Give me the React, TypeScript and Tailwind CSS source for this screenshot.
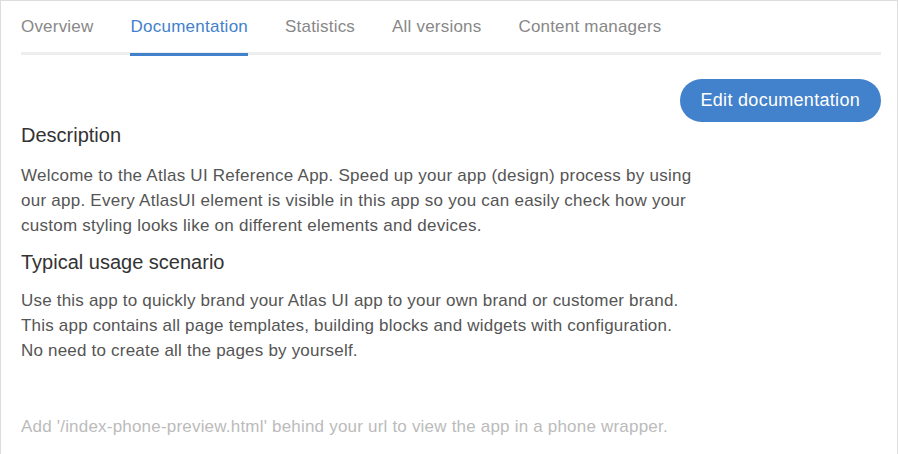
const tabs = ["Overview", "Documentation", "Statistics", "All versions", "Content managers"];

export default function App() {
    const active = "Documentation";

    return (
        <div
            className="w-[898px] h-[454px] overflow-hidden bg-white border-l border-t border-r border-[#dddddd] pl-5 pr-4"
            style={{ fontFamily: '"Liberation Sans", Arial, sans-serif' }}
        >
            {/* Tabs */}
            <div className="flex gap-[37px] border-b-[3px] border-[#eeeeee]">
                {tabs.map((tab) =>
                    tab === active ? (
                        <div
                            key={tab}
                            className="pt-[14px] pb-[14px] -mb-[4px] border-b-[3px] border-[#4281cb] text-[17px] tracking-[0.25px] leading-[24px] text-[#4281cb]"
                        >
                            {tab}
                        </div>
                    ) : (
                        <div
                            key={tab}
                            className="pt-[14px] pb-[13px] text-[17px] tracking-[0.2px] leading-[24px] text-[#888888]"
                        >
                            {tab}
                        </div>
                    )
                )}
            </div>

            {/* Toolbar */}
            <div className="flex justify-end mt-[24px]">
                <button className="h-[43px] px-[21px] rounded-full bg-[#4281cb] text-white text-[18px] tracking-[0.3px]">
                    Edit documentation
                </button>
            </div>

            {/* Content */}
            <h2 className="text-[20px] leading-[26px] text-[#333333]">Description</h2>
            <p className="mt-[15px] max-w-[680px] text-[17px] tracking-[0.25px] leading-[25px] text-[#555555]">
                Welcome to the Atlas UI Reference App. Speed up your app (design) process by using our app. Every
                AtlasUI element is visible in this app so you can easily check how your custom styling looks like on
                different elements and devices.
            </p>

            <h2 className="mt-[11px] text-[20px] leading-[26px] text-[#333333]">Typical usage scenario</h2>
            <p className="mt-[13px] text-[17px] tracking-[0.2px] leading-[25px] text-[#555555]">
                Use this app to quickly brand your Atlas UI app to your own brand or customer brand.
                <br />
                This app contains all page templates, building blocks and widgets with configuration.
                <br />
                No need to create all the pages by yourself.
            </p>

            <p className="mt-[51px] text-[17px] tracking-[0.2px] leading-[25px] text-[#bbbbbb]">
                Add '/index-phone-preview.html' behind your url to view the app in a phone wrapper.
            </p>
        </div>
    );
}
